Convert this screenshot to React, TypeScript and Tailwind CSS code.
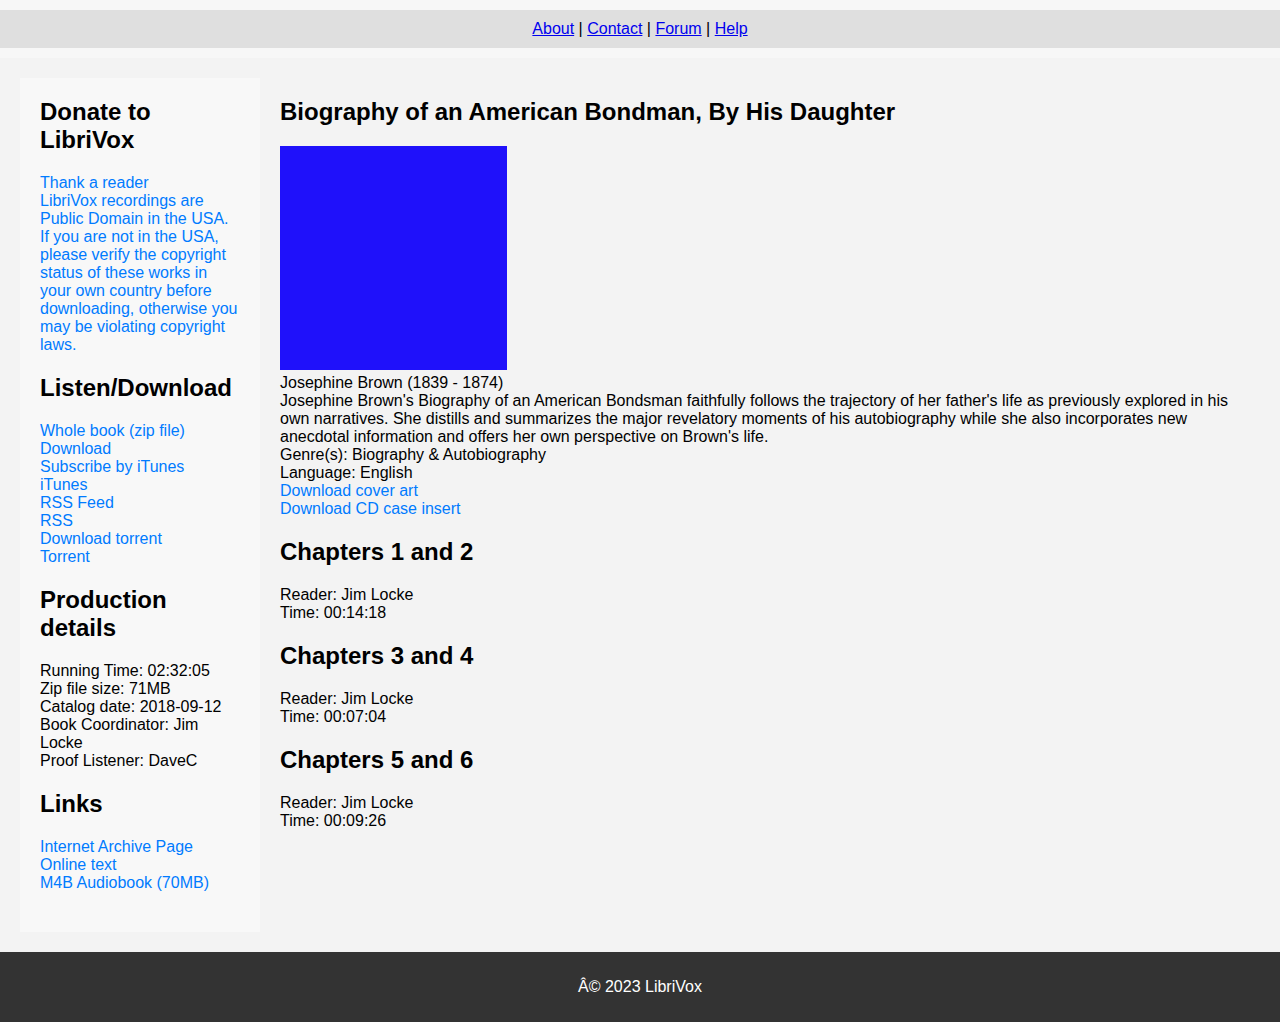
import React from "react";

const linkCls = "text-[#007bff] no-underline";

function SideH({ children, first }: { children: React.ReactNode; first?: boolean }) {
  return (
    <h2 className={`text-[24px] font-bold leading-[28px] mb-5 ${first ? "mt-0" : "mt-5"}`}>
      {children}
    </h2>
  );
}

export default function App() {
  return (
    <div className="min-h-[1022px] flex flex-col bg-[#f3f3f3] text-black text-[16px] leading-[18px] font-['Liberation_Sans',Arial,sans-serif]">
      <header className="bg-[#f7f7f7] py-[10px]">
        <nav className="bg-[#dfdfdf] py-[10px] text-center">
          <a href="#" className="text-[#0000ee] underline">About</a> |{" "}
          <a href="#" className="text-[#0000ee] underline">Contact</a> |{" "}
          <a href="#" className="text-[#0000ee] underline">Forum</a> |{" "}
          <a href="#" className="text-[#0000ee] underline">Help</a>
        </nav>
      </header>

      <main className="flex flex-1 items-start gap-5 p-5">
        <aside className="w-[240px] shrink-0 bg-[#f8f8f8] px-5 pt-5 pb-[40px]">
          <SideH first>Donate to LibriVox</SideH>
          <div className="flex flex-col">
            <a href="#" className={linkCls}>Thank a reader</a>
            <a href="#" className={linkCls}>
              LibriVox recordings are Public Domain in the USA. If you are not in the USA, please verify the copyright status of these works in your own country before downloading, otherwise you may be violating copyright laws.
            </a>
          </div>

          <SideH>Listen/Download</SideH>
          <div className="flex flex-col">
            <a href="#" className={linkCls}>Whole book (zip file)</a>
            <a href="#" className={linkCls}>Download</a>
            <a href="#" className={linkCls}>Subscribe by iTunes</a>
            <a href="#" className={linkCls}>iTunes</a>
            <a href="#" className={linkCls}>RSS Feed</a>
            <a href="#" className={linkCls}>RSS</a>
            <a href="#" className={linkCls}>Download torrent</a>
            <a href="#" className={linkCls}>Torrent</a>
          </div>

          <SideH>Production details</SideH>
          <div>
            <div>Running Time: 02:32:05</div>
            <div>Zip file size: 71MB</div>
            <div>Catalog date: 2018-09-12</div>
            <div>Book Coordinator: Jim Locke</div>
            <div>Proof Listener: DaveC</div>
          </div>

          <SideH>Links</SideH>
          <div className="flex flex-col">
            <a href="#" className={linkCls}>Internet Archive Page</a>
            <a href="#" className={linkCls}>Online text</a>
            <a href="#" className={linkCls}>M4B Audiobook (70MB)</a>
          </div>
        </aside>

        <section className="flex-1 min-w-0">
          <h2 className="text-[24px] font-bold leading-[28px] mt-5 mb-5">
            Biography of an American Bondman, By His Daughter
          </h2>
          <div className="w-[227px] h-[224px] bg-[#1f11fa] mb-[4px]" />
          <div>Josephine Brown (1839 - 1874)</div>
          <div>
            Josephine Brown's Biography of an American Bondsman faithfully follows the trajectory of her father's life as previously explored in his own narratives. She distills and summarizes the major revelatory moments of his autobiography while she also incorporates new anecdotal information and offers her own perspective on Brown's life.
          </div>
          <div>Genre(s): Biography &amp; Autobiography</div>
          <div>Language: English</div>
          <div className="flex flex-col items-start">
            <a href="#" className={linkCls}>Download cover art</a>
            <a href="#" className={linkCls}>Download CD case insert</a>
          </div>

          {[
            ["Chapters 1 and 2", "00:14:18"],
            ["Chapters 3 and 4", "00:07:04"],
            ["Chapters 5 and 6", "00:09:26"],
          ].map(([t, time]) => (
            <div key={t}>
              <h2 className="text-[24px] font-bold leading-[28px] mt-5 mb-5">{t}</h2>
              <div>Reader: Jim Locke</div>
              <div>Time: {time}</div>
            </div>
          ))}
        </section>
      </main>

      <footer className="bg-[#333333] text-white text-center py-[10px]">
        <p className="my-4">Â© 2023 LibriVox</p>
      </footer>
    </div>
  );
}
